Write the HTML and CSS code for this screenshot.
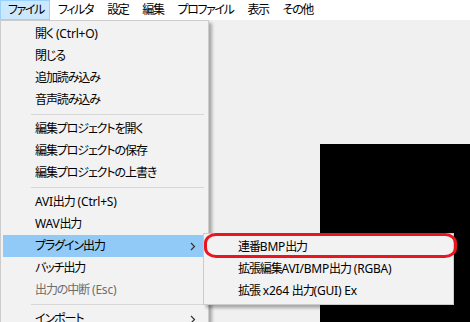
FILE: index.html
```html
<!DOCTYPE html>
<html lang="ja">
<head>
    <meta charset="UTF-8">
    <meta name="viewport" content="width=device-width, initial-scale=1.0">
    <title>AviUtl</title>
    <link rel="stylesheet" href="styles.css">
</head>
<body>
    <nav class="menubar">
        <span class="menubar-item active">ファイル</span>
        <span class="menubar-item">フィルタ</span>
        <span class="menubar-item">設定</span>
        <span class="menubar-item">編集</span>
        <span class="menubar-item">プロファイル</span>
        <span class="menubar-item">表示</span>
        <span class="menubar-item">その他</span>
    </nav>

    <main class="workspace">
        <div class="preview"></div>

        <ul class="menu file-menu">
            <li class="menu-item">開く<span class="en"> (Ctrl+O)</span></li>
            <li class="menu-item">閉じる</li>
            <li class="menu-item">追加読み込み</li>
            <li class="menu-item">音声読み込み</li>
            <li class="separator"></li>
            <li class="menu-item">編集プロジェクトを開く</li>
            <li class="menu-item">編集プロジェクトの保存</li>
            <li class="menu-item">編集プロジェクトの上書き</li>
            <li class="separator"></li>
            <li class="menu-item"><span class="en">AVI</span>出力<span class="en"> (Ctrl+S)</span></li>
            <li class="menu-item"><span class="en">WAV</span>出力</li>
            <li class="menu-item has-sub selected">プラグイン出力
                <svg class="arrow" width="6" height="9" viewBox="0 0 6 9"><polyline points="1,1 4.5,4.5 1,8" fill="none" stroke="#333" stroke-width="1.2"/></svg>
            </li>
            <li class="menu-item">バッチ出力</li>
            <li class="menu-item disabled">出力の中断<span class="en"> (Esc)</span></li>
            <li class="separator"></li>
            <li class="menu-item has-sub">インポート
                <svg class="arrow" width="6" height="9" viewBox="0 0 6 9"><polyline points="1,1 4.5,4.5 1,8" fill="none" stroke="#333" stroke-width="1.2"/></svg>
            </li>
        </ul>

        <ul class="menu sub-menu">
            <li class="menu-item">連番<span class="en">BMP</span>出力</li>
            <li class="menu-item">拡張編集<span class="en">AVI/BMP</span>出力<span class="en"> (RGBA)</span></li>
            <li class="menu-item">拡張<span class="en"> x264 </span>出力<span class="en">(GUI) Ex</span></li>
        </ul>

        <div class="mark"></div>
    </main>
</body>
</html>
```

FILE: styles.css
```css
* {
    box-sizing: border-box;
    margin: 0;
    padding: 0;
}

body {
    width: 470px;
    height: 322px;
    overflow: hidden;
    font-family: 'Noto Sans', 'Noto Sans CJK JP', sans-serif;
    font-size: 12px;
    font-feature-settings: "palt";
    letter-spacing: -1.1px;
    color: #000;
    background-color: #f0f0f0;
}

.en {
    letter-spacing: -0.2px;
}

.menubar {
    display: flex;
    height: 20px;
    background-color: #fff;
    letter-spacing: -1.4px;
}

.menubar-item {
    padding: 0 5px 0 7px;
    line-height: 18px;
    border: 1px solid transparent;
}

.menubar-item.active {
    background-color: #cce8ff;
    border-color: #99d1ff;
}

.workspace {
    position: relative;
    height: 302px;
    padding: 124px 0 0 320px;
}

.preview {
    height: 178px;
    background-color: #000;
}

.menu {
    position: absolute;
    list-style: none;
    background-color: #f2f2f2;
    border: 1px solid #cccccc;
    box-shadow: 3px 3px 3px rgba(0, 0, 0, 0.3);
}

.file-menu {
    left: 0;
    top: 0;
    width: 209px;
    padding: 2px 4px 2px 2px;
}

.sub-menu {
    left: 203px;
    top: 213px;
    width: 251px;
    padding: 2px;
}

.menu-item {
    position: relative;
    height: 22px;
    line-height: 22px;
    padding-left: 32px;
    white-space: nowrap;
}

.menu-item.selected {
    background-color: #91c9f7;
}

.menu-item.disabled {
    color: #6d6d6d;
}

.arrow {
    position: absolute;
    right: 8px;
    top: 7px;
}

.separator {
    height: 1px;
    margin: 3px 0 3px 28px;
    background-color: #d7d7d7;
}

.mark {
    position: absolute;
    left: 204px;
    top: 213px;
    width: 253px;
    height: 25px;
    border: 3px solid #e8161e;
    border-radius: 12px / 10px;
}
```
